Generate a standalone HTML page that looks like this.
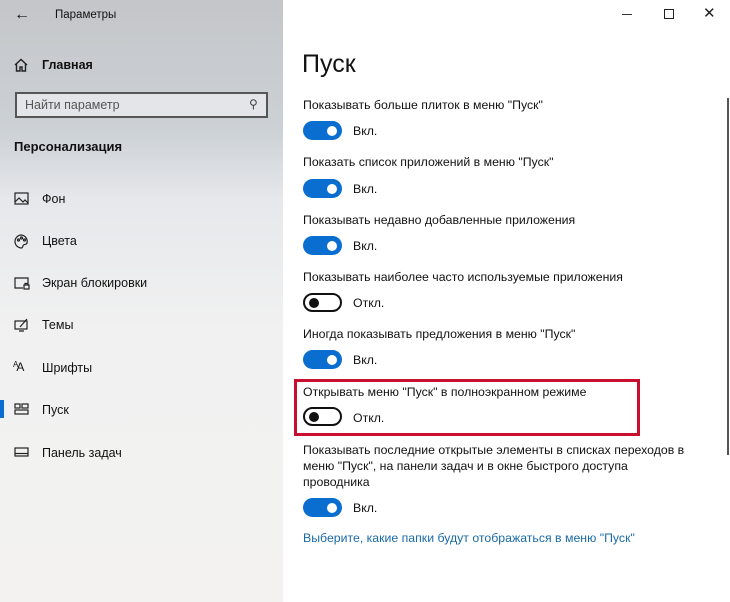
<!DOCTYPE html>
<html><head><meta charset="utf-8"><style>
*{margin:0;padding:0;box-sizing:border-box}
body{width:730px;height:602px;overflow:hidden;background:#fff;font-family:"Liberation Sans","Noto Sans CJK SC",sans-serif;color:#111;position:relative}
.side{position:absolute;left:0;top:0;width:283px;height:602px;background:linear-gradient(180deg,#c4c6c9 0px,#ccd1d6 130px,#e6e8eb 200px,#f1f1f1 330px,#f3f2f1 602px)}
.a{position:absolute;white-space:nowrap}
.t{font-size:12.5px}
.r{font-size:12.3px}
.sw{position:absolute;width:39px;height:19px;border-radius:10px}
.on{background:#0a6ed1}
.on::after{content:"";position:absolute;right:5px;top:4.5px;width:10px;height:10px;border-radius:50%;background:#fff}
.off{border:2px solid #111;background:#fff}
.off::after{content:"";position:absolute;left:4px;top:2.5px;width:10px;height:10px;border-radius:50%;background:#111}
.ic{position:absolute;left:14px}
</style></head><body>
<div class="side"></div>
<div class="a" style="left:14px;top:6px;font-size:16px">←</div>
<div class="a" style="left:55px;top:9px;font-size:11.5px">Параметры</div>
<svg class="ic" style="top:58px" width="14" height="14" viewBox="0 0 14 14" fill="none" stroke="#222" stroke-width="1.4"><path d="M1 7L7 1.5 13 7M2.5 5.8V13h3.5V9h2v4h3.5V5.8"/></svg>
<div class="a" style="left:42px;top:58px;font-size:12.5px;font-weight:bold">Главная</div>
<div class="a" style="left:15px;top:92px;width:253px;height:26px;border:2px solid #555;background:#e3e5e8"></div>
<div class="a" style="left:25px;top:98px;font-size:12.5px;color:#555">Найти параметр</div>
<div class="a" style="left:249px;top:97px;font-size:12px;color:#444">⚲</div>
<div class="a" style="left:14px;top:139px;font-size:13px;font-weight:bold">Персонализация</div>
<svg class="ic" style="top:192px" width="15" height="13" viewBox="0 0 15 13" fill="none" stroke="#222" stroke-width="1.2"><rect x="1" y="1" width="13" height="11"/><path d="M1 10l4-4 4 4 2-2 3 3"/></svg>
<div class="a t" style="left:42px;top:192px">Фон</div>
<svg class="ic" style="top:234px" width="15" height="15" viewBox="0 0 15 15" fill="none" stroke="#222" stroke-width="1.2"><path d="M7.5 1a6.5 6.5 0 1 0 0 13c1.5 0 1-2 2-3s3 0 3.5-2A6.5 6.5 0 0 0 7.5 1z"/><circle cx="4.5" cy="6" r="1"/><circle cx="7.5" cy="4" r="1"/><circle cx="10.5" cy="6" r="1"/></svg>
<div class="a t" style="left:42px;top:234px">Цвета</div>
<svg class="ic" style="top:277px" width="16" height="13" viewBox="0 0 16 13" fill="none" stroke="#222" stroke-width="1.2"><path d="M9 11H1V1h13v5"/><rect x="10" y="8" width="5" height="4"/><path d="M11 8V6.5h3V8"/></svg>
<div class="a t" style="left:42px;top:276px">Экран блокировки</div>
<svg class="ic" style="top:318px" width="15" height="14" viewBox="0 0 15 14" fill="none" stroke="#222" stroke-width="1.2"><rect x="1" y="3" width="12" height="8"/><path d="M5 13h5M6 9l7-8"/></svg>
<div class="a t" style="left:42px;top:318px">Темы</div>
<div class="a" style="left:13px;top:360px;font-size:12px;letter-spacing:-2px"><span style="font-size:8px;vertical-align:4px">A</span>A</div>
<div class="a t" style="left:42px;top:361px">Шрифты</div>
<div class="a" style="left:0;top:400px;width:4px;height:18px;background:#0a6ed1"></div>
<svg class="ic" style="top:403px" width="15" height="12" viewBox="0 0 15 12" fill="none" stroke="#222" stroke-width="1.2"><rect x="1" y="1" width="5" height="4"/><rect x="8" y="1" width="6" height="4"/><rect x="1" y="7" width="13" height="4"/></svg>
<div class="a t" style="left:42px;top:403px">Пуск</div>
<svg class="ic" style="top:447px" width="15" height="10" viewBox="0 0 15 10" fill="none" stroke="#222" stroke-width="1.2"><rect x="1" y="1" width="13" height="8"/><path d="M1 6.5h13"/></svg>
<div class="a t" style="left:42px;top:446px">Панель задач</div>

<div class="a" style="left:622px;top:14px;width:10px;height:1px;background:#333"></div>
<div class="a" style="left:664px;top:9px;width:10px;height:10px;border:1px solid #222"></div>
<div class="a" style="left:703px;top:4px;font-size:15px;color:#222">✕</div>
<div class="a" style="left:727px;top:98px;width:1.5px;height:357px;background:#555"></div>

<div class="a" style="left:302px;top:50px;font-size:25px;font-weight:300">Пуск</div>
<div class="a r" style="left:303px;top:98px">Показывать больше плиток в меню "Пуск"</div>
<div class="sw on" style="left:303px;top:121px"></div><div class="a r" style="left:353px;top:124px">Вкл.</div>
<div class="a r" style="left:303px;top:155px">Показать список приложений в меню "Пуск"</div>
<div class="sw on" style="left:303px;top:179px"></div><div class="a r" style="left:353px;top:182px">Вкл.</div>
<div class="a r" style="left:303px;top:213px">Показывать недавно добавленные приложения</div>
<div class="sw on" style="left:303px;top:236px"></div><div class="a r" style="left:353px;top:239px">Вкл.</div>
<div class="a r" style="left:303px;top:270px">Показывать наиболее часто используемые приложения</div>
<div class="sw off" style="left:303px;top:293px"></div><div class="a r" style="left:353px;top:296px">Откл.</div>
<div class="a r" style="left:303px;top:327px">Иногда показывать предложения в меню "Пуск"</div>
<div class="sw on" style="left:303px;top:350px"></div><div class="a r" style="left:353px;top:353px">Вкл.</div>
<div class="a" style="left:294px;top:379px;width:346px;height:57px;border:3px solid #c8102e"></div>
<div class="a r" style="left:303px;top:385px">Открывать меню "Пуск" в полноэкранном режиме</div>
<div class="sw off" style="left:303px;top:407px"></div><div class="a r" style="left:353px;top:411px">Откл.</div>
<div class="a r" style="left:303px;top:442px;line-height:16px">Показывать последние открытые элементы в списках переходов в<br>меню "Пуск", на панели задач и в окне быстрого доступа<br>проводника</div>
<div class="sw on" style="left:303px;top:498px"></div><div class="a r" style="left:353px;top:501px">Вкл.</div>
<div class="a r" style="left:303px;top:531px;color:#1a6aa5">Выберите, какие папки будут отображаться в меню "Пуск"</div>
</body></html>
